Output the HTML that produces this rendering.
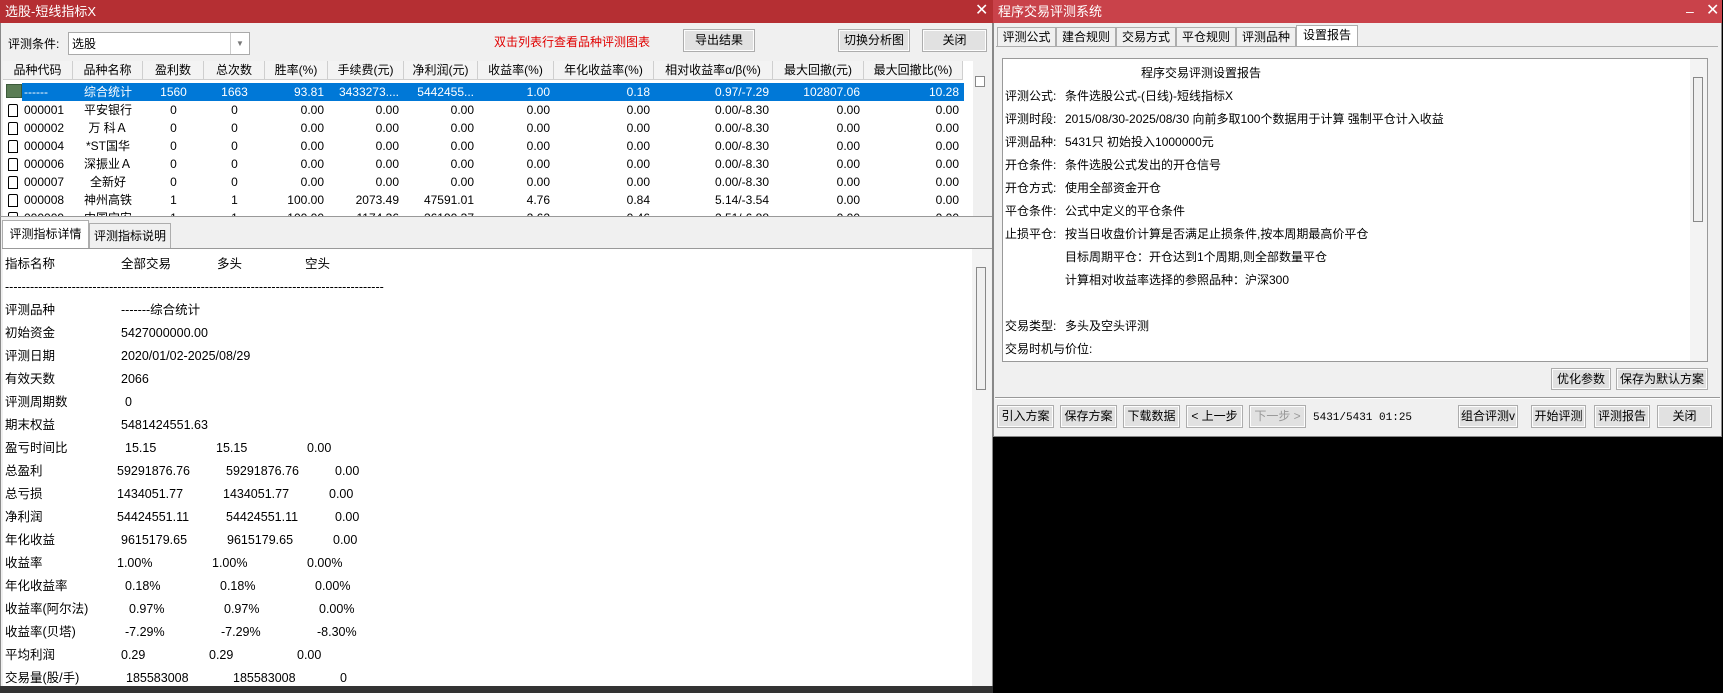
<!DOCTYPE html>
<html><head><meta charset="utf-8"><style>
*{margin:0;padding:0;box-sizing:border-box}
body{width:1723px;height:693px;background:#000;position:relative;overflow:hidden;font-family:"Liberation Sans","Noto Sans CJK SC",sans-serif;font-size:12px;color:#000;line-height:16px}
.a{position:absolute;white-space:nowrap}
.btn{position:absolute;background:#e1e1e1;border:1px solid #adadad;box-shadow:inset 0 0 0 1px #fdfdfd;text-align:center;font-size:12px;white-space:nowrap;overflow:hidden}
.th{position:absolute;top:0;height:19px;background:#f3f3f3;border-right:1px solid #cfcfcf;border-bottom:1px solid #cfcfcf;text-align:center;line-height:18px;white-space:nowrap}
.r{position:absolute;height:18px;line-height:18px;text-align:right;white-space:nowrap}
.tab{position:absolute;top:27px;height:19px;border:1px solid #adadad;border-bottom:none;background:#f0f0f0;line-height:18px;text-align:center;white-space:nowrap;overflow:hidden}
</style></head><body>
<div class="a" style="left:0;top:0;width:993px;height:689px;background:#f0f0f0;border:1px solid #888"></div>
<div class="a" style="left:0;top:0;width:993px;height:23px;background:#b52f33;color:#fff;line-height:23px;padding-left:5px;font-size:13px">选股-短线指标X</div>
<div class="a" style="left:975px;top:3px;color:#fff;font-size:16px">✕</div>
<div class="a" style="left:8px;top:36px;font-size:12px">评测条件:</div>
<div class="a" style="left:68px;top:32px;width:182px;height:23px;background:#fff;border:1px solid #aaa"><span style="position:absolute;left:3px;top:3px;font-size:12px">选股</span><span style="position:absolute;right:0;top:0;width:19px;height:21px;border-left:1px solid #ccc;color:#777;font-size:8px;text-align:center;line-height:21px">▼</span></div>
<div class="a" style="left:494px;top:34px;color:#e00000;font-size:12px">双击列表行查看品种评测图表</div>
<div class="btn" style="left:683px;top:29px;width:72px;height:23px;line-height:21px">导出结果</div>
<div class="btn" style="left:838px;top:29px;width:72px;height:23px;line-height:21px">切换分析图</div>
<div class="btn" style="left:922px;top:29px;width:65px;height:23px;line-height:21px">关闭</div>
<div class="a" style="left:973px;top:60px;width:18px;height:156px;background:#f0f0f0"></div>
<div class="a" style="left:975px;top:76px;width:10px;height:11px;border:1px solid #888;background:#fff"></div>
<div class="a" style="left:3px;top:61px;width:970px;height:155px;background:#fff;overflow:hidden">
<div class="th" style="left:0;width:70px">品种代码</div><div class="th" style="left:70px;width:70px">品种名称</div><div class="th" style="left:140px;width:61px">盈利数</div><div class="th" style="left:201px;width:61px">总次数</div><div class="th" style="left:262px;width:63px">胜率(%)</div><div class="th" style="left:325px;width:76px">手续费(元)</div><div class="th" style="left:401px;width:74px">净利润(元)</div><div class="th" style="left:475px;width:76px">收益率(%)</div><div class="th" style="left:551px;width:100px">年化收益率(%)</div><div class="th" style="left:651px;width:119px">相对收益率α/β(%)</div><div class="th" style="left:770px;width:91px">最大回撤(元)</div><div class="th" style="left:861px;width:99px">最大回撤比(%)</div>
<div class="a" style="left:19px;top:22px;width:942px;height:18px;background:#0078d7"></div>
<div class="a" style="left:3px;top:23px;width:16px;height:14px;background:#5b7d55;border:1px solid #3c5a3a"></div>
<div id="rows"></div>
</div>
<script>
var d=[["------","综合统计","1560","1663","93.81","3433273....","5442455...","1.00","0.18","0.97/-7.29","102807.06","10.28"],
["000001","平安银行","0","0","0.00","0.00","0.00","0.00","0.00","0.00/-8.30","0.00","0.00"],
["000002","万 科Ａ","0","0","0.00","0.00","0.00","0.00","0.00","0.00/-8.30","0.00","0.00"],
["000004","*ST国华","0","0","0.00","0.00","0.00","0.00","0.00","0.00/-8.30","0.00","0.00"],
["000006","深振业Ａ","0","0","0.00","0.00","0.00","0.00","0.00","0.00/-8.30","0.00","0.00"],
["000007","全新好","0","0","0.00","0.00","0.00","0.00","0.00","0.00/-8.30","0.00","0.00"],
["000008","神州高铁","1","1","100.00","2073.49","47591.01","4.76","0.84","5.14/-3.54","0.00","0.00"],
["000009","中国宝安","1","1","100.00","1174.36","26190.37","2.62","0.46","2.51/-6.88","0.00","0.00"]];
var R=[null,null,180,240,324,399,474,550,650,769,860,959];
var h="";
d.forEach(function(r,i){var y=22+i*18,col=i==0?"#fff":"#000";
if(i>0)h+='<div class="a" style="left:5px;top:'+(y+3)+'px;width:10px;height:13px;border:1px solid #000;border-radius:2px 2px 0 0;background:#fff"></div>';
h+='<div class="r" style="left:21px;top:'+y+'px;color:'+col+';text-align:left">'+r[0]+'</div>';
h+='<div class="r" style="left:70px;width:70px;top:'+y+'px;color:'+col+';text-align:center">'+r[1]+'</div>';
h+='<div class="r" style="left:140px;width:61px;top:'+y+'px;color:'+col+';text-align:center">'+r[2]+'</div>';
h+='<div class="r" style="left:201px;width:61px;top:'+y+'px;color:'+col+';text-align:center">'+r[3]+'</div>';
for(var k=4;k<12;k++)h+='<div class="r" style="left:'+(R[k]-123)+'px;width:120px;top:'+y+'px;color:'+col+'">'+r[k]+'</div>';});
document.getElementById("rows").innerHTML=h;
</script>
<div class="a" style="left:0;top:216px;width:992px;height:1px;background:#999"></div>
<div class="tab" style="left:2px;top:220px;width:87px;height:29px;background:#fff;line-height:26px">评测指标详情</div>
<div class="tab" style="left:89px;top:223px;width:82px;height:25px;line-height:24px">评测指标说明</div>
<div class="a" style="left:2px;top:248px;width:990px;height:1px;background:#999"></div>
<div class="a" style="left:3px;top:249px;width:969px;height:437px;background:#fff"></div>
<div class="a" style="left:972px;top:249px;width:19px;height:437px;background:#f3f3f3"></div>
<div class="a" style="left:976px;top:267px;width:10px;height:123px;border:1px solid #888;background:#f0f0f0"></div>
<div class="a" style="left:0;top:686px;width:993px;height:7px;background:#333"></div>
<div id="det"></div>
<script>
var L=[["指标名称",[[121,"全部交易"],[217,"多头"],[305,"空头"]]],
["-------------------------------------------------------------------------------------------",[]],
["评测品种",[[121,"-------综合统计"]]],["初始资金",[[121,"5427000000.00"]]],["评测日期",[[121,"2020/01/02-2025/08/29"]]],["有效天数",[[121,"2066"]]],["评测周期数",[[125,"0"]]],["期末权益",[[121,"5481424551.63"]]],
["盈亏时间比",[[125,"15.15"],[216,"15.15"],[307,"0.00"]]],["总盈利",[[117,"59291876.76"],[226,"59291876.76"],[335,"0.00"]]],["总亏损",[[117,"1434051.77"],[223,"1434051.77"],[329,"0.00"]]],["净利润",[[117,"54424551.11"],[226,"54424551.11"],[335,"0.00"]]],["年化收益",[[121,"9615179.65"],[227,"9615179.65"],[333,"0.00"]]],["收益率",[[117,"1.00%"],[212,"1.00%"],[307,"0.00%"]]],["年化收益率",[[125,"0.18%"],[220,"0.18%"],[315,"0.00%"]]],["收益率(阿尔法)",[[129,"0.97%"],[224,"0.97%"],[319,"0.00%"]]],["收益率(贝塔)",[[125,"-7.29%"],[221,"-7.29%"],[317,"-8.30%"]]],["平均利润",[[121,"0.29"],[209,"0.29"],[297,"0.00"]]],["交易量(股/手)",[[126,"185583008"],[233,"185583008"],[340,"0"]]]];
var s="";L.forEach(function(l,i){var y=256+i*23;s+='<div class="a" style="left:5px;top:'+y+'px;font-size:12.5px;line-height:16px">'+l[0]+'</div>';l[1].forEach(function(c){s+='<div class="a" style="left:'+c[0]+'px;top:'+y+'px;font-size:12.5px;line-height:16px">'+c[1]+'</div>'})});
document.getElementById("det").innerHTML=s;
</script>
<div class="a" style="left:993px;top:0;width:729px;height:437px;background:#f0f0f0;border:1px solid #888"></div>
<div class="a" style="left:993px;top:0;width:729px;height:23px;background:#c9424a;color:#fff;line-height:23px;padding-left:5px;font-size:13px">程序交易评测系统</div>
<div class="a" style="left:1686px;top:3px;color:#fff;font-size:14px">–</div>
<div class="a" style="left:1706px;top:3px;color:#fff;font-size:16px">✕</div>
<div class="tab" style="left:997px;width:59px">评测公式</div><div class="tab" style="left:1056px;width:60px">建合规则</div><div class="tab" style="left:1116px;width:60px">交易方式</div><div class="tab" style="left:1176px;width:60px">平仓规则</div><div class="tab" style="left:1236px;width:60px">评测品种</div><div class="tab" style="left:1296px;width:62px;top:25px;height:21px;background:#fff">设置报告</div>
<div class="a" style="left:996px;top:46px;width:722px;height:1px;background:#adadad"></div>
<div class="a" style="left:1002px;top:58px;width:706px;height:304px;background:#fff;border:1px solid #999"></div>
<div class="a" style="left:1690px;top:59px;width:17px;height:302px;background:#f3f3f3"></div>
<div class="a" style="left:1693px;top:77px;width:10px;height:145px;border:1px solid #888;background:#f0f0f0"></div>
<div class="a" style="left:1141px;top:65px">程序交易评测设置报告</div>
<div id="rep"></div>
<script>
var P=[["评测公式:","条件选股公式-(日线)-短线指标X"],["评测时段:","2015/08/30-2025/08/30 向前多取100个数据用于计算 强制平仓计入收益"],["评测品种:","5431只 初始投入1000000元"],["开仓条件:","条件选股公式发出的开仓信号"],["开仓方式:","使用全部资金开仓"],["平仓条件:","公式中定义的平仓条件"],["止损平仓:","按当日收盘价计算是否满足止损条件,按本周期最高价平仓"],["","目标周期平仓：开仓达到1个周期,则全部数量平仓"],["","计算相对收益率选择的参照品种：沪深300"],["",""],["交易类型:","多头及空头评测"],["交易时机与价位:",""]];
var t="";P.forEach(function(p,i){var y=88+i*23;t+='<div class="a" style="left:1005px;top:'+y+'px">'+p[0]+'</div><div class="a" style="left:1065px;top:'+y+'px">'+p[1]+'</div>'});
document.getElementById("rep").innerHTML=t;
</script>
<div class="btn" style="left:1551px;top:368px;width:60px;height:22px;line-height:20px">优化参数</div>
<div class="btn" style="left:1616px;top:368px;width:92px;height:22px;line-height:20px">保存为默认方案</div>
<div class="a" style="left:995px;top:397px;width:725px;height:2px;border-top:1px solid #999;border-bottom:1px solid #fff"></div>
<div class="btn" style="left:997px;top:405px;width:57px;height:23px;line-height:21px">引入方案</div>
<div class="btn" style="left:1060px;top:405px;width:57px;height:23px;line-height:21px">保存方案</div>
<div class="btn" style="left:1123px;top:405px;width:57px;height:23px;line-height:21px">下载数据</div>
<div class="btn" style="left:1186px;top:405px;width:57px;height:23px;line-height:21px">&lt; 上一步</div>
<div class="btn" style="left:1249px;top:405px;width:57px;height:23px;line-height:21px;color:#999">下一步 &gt;</div>
<div class="a" style="left:1313px;top:410px;font-family:'Liberation Mono',monospace;font-size:11px">5431/5431 01:25</div>
<div class="btn" style="left:1458px;top:405px;width:60px;height:23px;line-height:21px">组合评测v</div>
<div class="btn" style="left:1531px;top:405px;width:55px;height:23px;line-height:21px">开始评测</div>
<div class="btn" style="left:1594px;top:405px;width:56px;height:23px;line-height:21px">评测报告</div>
<div class="btn" style="left:1657px;top:405px;width:55px;height:23px;line-height:21px">关闭</div>
</body></html>
